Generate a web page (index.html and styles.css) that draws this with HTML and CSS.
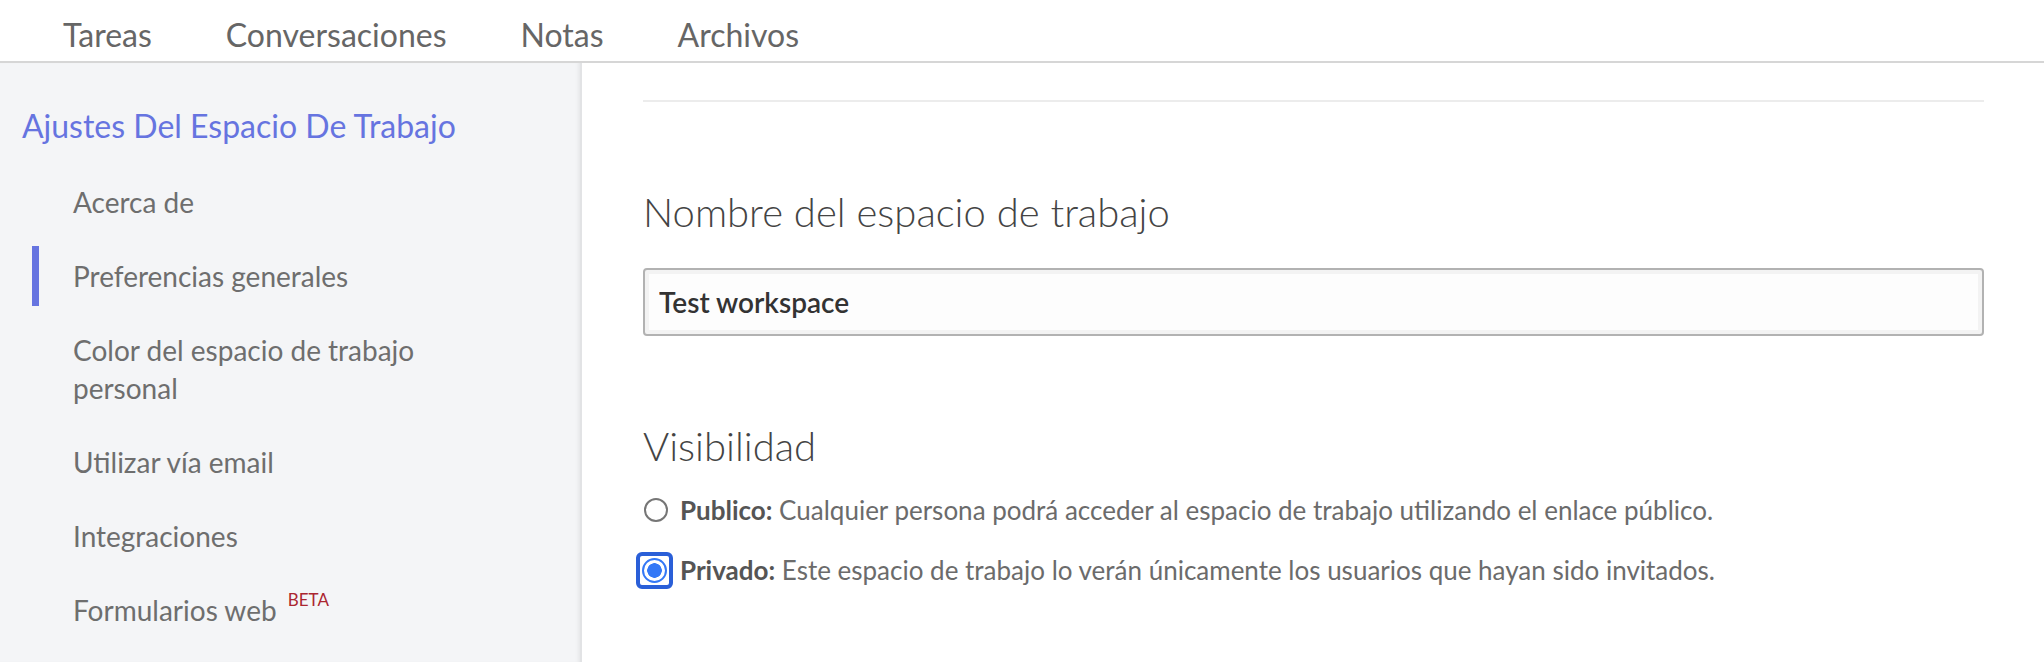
FILE: index.html
```html
<!DOCTYPE html>
<html lang="es">
<head>
    <meta charset="UTF-8">
    <meta name="viewport" content="width=device-width, initial-scale=1.0">
    <title>Ajustes del espacio de trabajo</title>
    <link rel="stylesheet" href="styles.css">
</head>
<body>
    <nav class="tabs">
        <a class="tab">Tareas</a>
        <a class="tab">Conversaciones</a>
        <a class="tab">Notas</a>
        <a class="tab">Archivos</a>
    </nav>

    <div class="page">
        <aside class="sidebar">
            <h2 class="sidebar-title">Ajustes Del Espacio De Trabajo</h2>
            <ul class="menu">
                <li class="menu-item">Acerca de</li>
                <li class="menu-item active">Preferencias generales</li>
                <li class="menu-item">Color del espacio de trabajo personal</li>
                <li class="menu-item">Utilizar vía email</li>
                <li class="menu-item">Integraciones</li>
                <li class="menu-item">Formularios web <sup class="beta">BETA</sup></li>
            </ul>
        </aside>

        <main class="content">
            <div class="divider"></div>

            <h3 class="section-title">Nombre del espacio de trabajo</h3>
            <input type="text" class="text-input" value="Test workspace">

            <h3 class="section-title">Visibilidad</h3>
            <label class="radio-row">
                <input type="radio" name="visibility" class="radio">
                <span><b>Publico:</b> Cualquier persona podrá acceder al espacio de trabajo utilizando el enlace público.</span>
            </label>
            <label class="radio-row">
                <span class="focus-ring"><input type="radio" name="visibility" class="radio" checked></span>
                <span><b>Privado:</b> Este espacio de trabajo lo verán únicamente los usuarios que hayan sido invitados.</span>
            </label>
        </main>
    </div>
</body>
</html>
```

FILE: styles.css
```css
html, body {
    height: 100%;
}
body {
    font-family: Lato, "Open Sans", sans-serif;
    margin: 0;
    padding: 0;
    background: #fff;
    display: flex;
    flex-direction: column;
}
.tabs {
    height: 61px;
    display: flex;
    padding-left: 26px;
    border-bottom: 2px solid #d6d6d6;
    flex-shrink: 0;
}
.tab {
    padding: 0 37px;
    font-size: 32px;
    line-height: 70px;
    height: 61px;
    color: #666;
}
.page {
    flex: 1;
    display: flex;
}
.sidebar {
    width: 580px;
    flex-shrink: 0;
    background: #f4f5f7;
    border-right: 2px solid #e2e3e5;
    box-shadow: inset -4px 0 4px -3px rgba(0, 0, 0, 0.08);
}
.sidebar-title {
    margin: 43px 0 26px 22px;
    font-size: 32px;
    line-height: 40px;
    font-weight: 400;
    color: #6674e0;
}
.menu {
    list-style: none;
    margin: 0;
    padding: 0;
    display: flex;
    flex-direction: column;
    gap: 14px;
}
.menu-item {
    margin-left: 32px;
    padding: 11px 90px 11px 34px;
    border-left: 7px solid transparent;
    font-size: 28px;
    line-height: 38px;
    color: #6e6e6e;
}
.menu-item.active {
    border-left-color: #6674e0;
}
.beta {
    font-size: 17px;
    line-height: 0;
    color: #ab2630;
    margin-left: 4px;
    vertical-align: 15px;
}
.content {
    flex: 1;
    padding: 0 60px 0 61px;
}
.divider {
    margin-top: 37px;
    border-top: 2px solid #ececec;
}
.section-title {
    margin: 86px 0 32px;
    font-size: 40px;
    line-height: 48px;
    font-weight: 300;
    color: #444;
}
.text-input {
    display: block;
    width: 100%;
    box-sizing: border-box;
    height: 68px;
    padding: 0 14px;
    border: 2px solid #b2b2b2;
    border-radius: 4px;
    background: #fdfdfd;
    box-shadow: inset 0 0 0 4px #f3f3f3;
    font-family: inherit;
    font-size: 28px;
    font-weight: 600;
    color: #333;
    outline: none;
}
.section-title + .radio-row {
    margin-top: -12px;
}
.radio-row {
    display: flex;
    align-items: center;
    height: 40px;
    margin-bottom: 20px;
    font-size: 26px;
    color: #6b6b6b;
}
.radio-row b {
    color: #555;
}
.radio {
    appearance: none;
    width: 24px;
    height: 24px;
    margin: 0 12px 0 1px;
    border: 2px solid #767676;
    border-radius: 50%;
    background: #fff;
    box-sizing: border-box;
}
.radio:checked {
    border-color: #3478f6;
    background: radial-gradient(circle, #3478f6 0 7px, #fff 7.5px);
}
.focus-ring {
    display: flex;
    margin: 0 7px 0 -7px;
    padding: 2px;
    border: 4px solid #2a5fd8;
    border-radius: 6px;
}
.focus-ring .radio {
    width: 25px;
    height: 25px;
    margin: 0;
}
```
